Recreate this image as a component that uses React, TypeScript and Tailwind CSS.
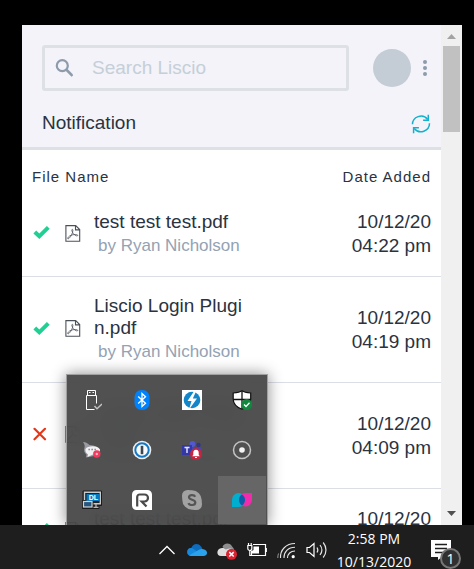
import type { ReactNode } from "react";

type FileRow = { name: string; by: string; date: string; time: string; ok: boolean };

const files: FileRow[] = [
  { name: "test test test.pdf", by: "Ryan Nicholson", date: "10/12/20", time: "04:22 pm", ok: true },
  { name: "Liscio Login Plugin.pdf", by: "Ryan Nicholson", date: "10/12/20", time: "04:19 pm", ok: true },
  { name: "Liscio Login Plugin.pdf", by: "Ryan Nicholson", date: "10/12/20", time: "04:09 pm", ok: false },
  { name: "test test test.pdf", by: "Ryan Nicholson", date: "10/12/20", time: "04:02 pm", ok: true },
];

function Icon({ children }: { children: ReactNode }) {
  return (
    <svg viewBox="0 0 20 20" width="20" height="20" fill="none" aria-hidden="true">
      {children}
    </svg>
  );
}

function StatusIcon({ ok }: { ok: boolean }) {
  return ok ? (
    <svg viewBox="0 0 17 18" width="17" height="18" aria-label="Uploaded" className="block">
      <path d="M1.800 7l4.500 4.300L15.300 2.400" fill="none" stroke="#20cf92" strokeWidth="4" />
    </svg>
  ) : (
    <svg viewBox="0 0 17 18" width="17" height="18" aria-label="Failed" className="block">
      <path d="M1.500 1.800l10.500 10.500M12 1.800L1.500 12.300" fill="none" stroke="#e0381b" strokeWidth="2.200" strokeLinecap="round" />
    </svg>
  );
}

function PdfIcon() {
  return (
    <svg viewBox="0 0 16 19" width="16" height="19" fill="none" stroke="#4b5159" aria-hidden="true" className="block">
      <path d="M.9.6h9.800l4 4v11.600H.9zM10.500.8v4.100h4" strokeWidth="1.100" />
      <path
        d="M2.600 13.200c1-2 2.900-2.900 5-3.400 1.700-.4 4-.4 5 .2.700.6-.5 1.200-1.600.7C8.800 9.700 7.200 7.600 6.800 5.200c-.1-1.100 1.100-1.200 1.100 0C7.800 8 6 11.600 4 13.400c-.7.6-1.500.5-1.400-.2z"
        strokeWidth=".8"
      />
    </svg>
  );
}

const trayApps: { label: string; icon: ReactNode; active?: boolean }[] = [
  {
    label: "Safely remove hardware",
    icon: (
      <Icon>
        <path d="M5.500 5V.5h8V5M4.500 19.500v-14h10v8M4.500 19.500h8" stroke="#fff" />
        <path d="M7 2.500h1.500M10.500 2.500H12" stroke="#fff" strokeWidth="1.200" />
        <path d="M12.500 16l2.500 2.800L20 14" stroke="#c4c4c4" strokeWidth="1.400" />
      </Icon>
    ),
  },
  {
    label: "Bluetooth",
    icon: (
      <Icon>
        <rect x="2.500" width="15" height="20" rx="7" fill="#0082fc" />
        <path d="M6.200 6.500l7.300 6.800-3.500 3.200V3.500l3.500 3.200-7.300 6.800" stroke="#fff" strokeWidth="1.300" />
      </Icon>
    ),
  },
  {
    label: "Disc tools",
    icon: (
      <Icon>
        <rect width="20" height="20" fill="#fff" />
        <circle cx="10" cy="10" r="8.300" fill="#1286c8" />
        <path d="M12.500.5L5.500 11h4L7 19.500 15 8.500h-4.200L14.500.5z" fill="#fff" />
      </Icon>
    ),
  },
  {
    label: "Windows Security",
    icon: (
      <Icon>
        <path d="M10 .8c2.500 1.800 5.500 2 8.700 2.200V9c0 5-4 8.500-8.700 10.200C5.300 17.500 1.200 14 1.200 9V3C4.500 2.800 7.500 2.600 10 .8z" fill="#fff" stroke="#111" strokeWidth="1.200" />
        <path d="M10 1v18M1.200 9.500h17.500" stroke="#111" strokeWidth="1.300" />
        <circle cx="14.700" cy="14.500" r="5.500" fill="#10893e" />
        <path d="M12 14.500l2 2 3.500-3.700" stroke="#fff" strokeWidth="1.300" />
      </Icon>
    ),
  },
  {
    label: "Shark chat",
    icon: (
      <Icon>
        <path d="M1 2c3 .2 5 1.500 6.500 3 5 .2 9.500 2 10.500 5.500-1 3-3 5-6 5.500L4 17.500l.5-3C2.500 13 1.500 11 2.500 7.500 3 6 2.500 4 1 2z" fill="#9a9aa2" />
        <path d="M3.500 9c2-3.500 12-4 14.500.5 0 3.500-3.500 5-7 5L5.500 17 6 14.500C4 13 3 11 3.500 9z" fill="#f2f2f4" />
        <path d="M6.500 9.500h1.300M9.500 9.500h1.300M12.500 9.500h1.300" stroke="#777" strokeWidth="1.500" />
        <circle cx="14.800" cy="14" r="3.700" fill="#f03a5f" />
        <circle cx="14.800" cy="14" r="1.200" fill="#ffb5c2" />
      </Icon>
    ),
  },
  {
    label: "Password manager",
    icon: (
      <Icon>
        <circle cx="10" cy="10" r="9.300" fill="#eee" />
        <circle cx="10" cy="10" r="6.700" fill="#fafafa" stroke="#1478c4" strokeWidth="2" />
        <path d="M10 5.800v8.400" stroke="#3c4650" strokeWidth="2.600" />
      </Icon>
    ),
  },
  {
    label: "Teams",
    icon: (
      <Icon>
        <circle cx="10.500" cy="4" r="3" fill="#5358d0" />
        <circle cx="16.500" cy="5" r="2.200" fill="#33368c" />
        <path d="M7 7.500h13V13a6 6 0 01-12 2z" fill="#4548ae" />
        <rect y="5" width="10" height="10" fill="#3438a6" />
        <path d="M2.500 7.500h5M5 7.500v5.500" stroke="#e6e6ff" strokeWidth="1.400" />
        <circle cx="14" cy="14" r="6" fill="#c4253f" />
        <path d="M14 9.800c-2 0-2.700 1.400-2.700 3v2l-1 1.400h7.400l-1-1.400v-2c0-1.600-.7-3-2.700-3zM13 17h2v1h-2z" fill="#fff" />
      </Icon>
    ),
  },
  {
    label: "Recorder",
    icon: (
      <Icon>
        <circle cx="10" cy="10" r="8.500" stroke="#c4c4c4" strokeWidth="1.500" />
        <circle cx="10" cy="10" r="2.800" fill="#f4f4f4" />
      </Icon>
    ),
  },
  {
    label: "DisplayLink",
    icon: (
      <Icon>
        <path d="M1 1h18.500v14.500H17V18.500H.5V10.500H1z" fill="#222" stroke="#1b1b1b" />
        <path d="M2.500 10V2.200h15.800v11.600H11.500" stroke="#c9c9c9" strokeWidth="1.400" />
        <rect x="4.500" y="4" width="12.500" height="7" fill="#0878be" />
        <text x="6.800" y="10" fontSize="7" fontWeight="700" fontFamily="Liberation Sans, sans-serif" fill="#fff">DL</text>
        <rect x="1.500" y="11.500" width="8.500" height="5.500" fill="#27567c" stroke="#d2d2d2" strokeWidth="1.200" />
        <path d="M11.500 17.300h5M14 14v3" stroke="#b5b5b5" strokeWidth="1.300" />
      </Icon>
    ),
  },
  {
    label: "Remote",
    icon: (
      <Icon>
        <path d="M4.500 0h11A4.500 4.500 0 0120 4.500V20H4.500A4.500 4.500 0 010 15.500v-11A4.500 4.500 0 014.500 0z" fill="#fff" />
        <path d="M5.200 16.500V7a2.500 2.500 0 012.500-2.500h4.800a3 3 0 010 7h-2.800l4.800 5" stroke="#4a4a4a" strokeWidth="2.200" />
      </Icon>
    ),
  },
  {
    label: "Skype",
    icon: (
      <Icon>
        <path d="M5.500 0C8 0 8 .3 10 .3A9.700 9.700 0 0119.700 10c0 2 .3 2.500.3 4.500A5.500 5.500 0 0114.500 20c-2.500 0-2.500-.3-4.500-.3A9.700 9.700 0 01.3 10C.3 8 0 7.500 0 5.500A5.500 5.500 0 015.500 0z" fill="#a2a2a2" />
        <path d="M13.200 6.700C12.200 4.500 7 4.500 7 7.300c0 3 6.300 2 6.300 5.200 0 3.300-5.800 3.200-6.800.6" stroke="#555" strokeWidth="2.200" />
      </Icon>
    ),
  },
  {
    label: "Liscio",
    active: true,
    icon: (
      <Icon>
        <path d="M0 17V9.500a6.500 6.500 0 0113 0c0 4.200-2.500 7.500-6.500 7.500z" fill="#00aecf" />
        <path d="M20 3v7a6.500 6.500 0 01-13 0c0-4 2.500-7 6.500-7z" fill="#f02cac" />
        <path d="M10 4.600c1.900 1.200 3 2.900 3 5.200s-1.100 4.400-3 5.800c-1.900-1.200-3-3.200-3-5.600s1.100-4.200 3-5.400z" fill="#0a5ea8" />
      </Icon>
    ),
  },
];

const statusIcons: { label: string; icon: ReactNode }[] = [
  { label: "Hide hidden icons", icon: <Icon><path d="M2.500 14L10 6.500l7.500 7.500" stroke="#fff" strokeWidth="1.300" /></Icon> },
  {
    label: "OneDrive",
    icon: (
      <Icon>
        <path d="M4 16a4 4 0 01.3-8C6 4 10.500 2.200 14 6.500c1 1 1.300 2 1.300 2.500a3.600 3.600 0 01.7 7z" fill="#0f6cbd" />
        <path d="M.5 13.500C-.5 10 2 7.500 5 8l11.500 7.500H4c-2 0-3.200-.8-3.500-2z" fill="#1689dc" />
        <path d="M2 15.500L12 9.700c2-1.200 4-.8 4.500-.2 2.500.3 3.700 2 3.500 3.700-.3 1.800-1.700 2.800-3.500 2.800H4c-.8 0-1.500-.2-2-.5z" fill="#2ba3ec" />
      </Icon>
    ),
  },
  {
    label: "OneDrive sync error",
    icon: (
      <Icon>
        <path d="M5.500 7C6.500 3 13 1.500 15.500 7c1 .8 1.500 2 1.500 3H9z" fill="#8e8e8e" />
        <path d="M4 16c-5 0-5-7.500 1-8 1.500-.2 3 .5 4 1.500 4-1.800 9-1 9 3s-2 3.500-4 3.500z" fill="#dedede" />
        <circle cx="14.500" cy="14.300" r="5.500" fill="#d92532" />
        <path d="M12.300 12.100l4.400 4.400M16.700 12.100l-4.400 4.400" stroke="#fff" strokeWidth="1.500" />
      </Icon>
    ),
  },
  {
    label: "Battery charging",
    icon: (
      <Icon>
        <path d="M6 4.500h12.500v11H4.500V11M19.300 8v4" stroke="#fff" strokeWidth="1.200" />
        <path d="M6.500 6.500H12v7H4.500V11l2-1z" fill="#fff" />
        <path d="M.8 5.500h4v3a2 2 0 01-4 0zM1.500 3v2M4.200 3v2M2.800 10v5.500h2" stroke="#fff" strokeWidth="1.200" />
      </Icon>
    ),
  },
  {
    label: "Wi-Fi",
    icon: (
      <Icon>
        <path d="M3.500 18C3 10 9 3.500 18 3.500M7 18C6.800 12 11 7.300 18 7.300M10.500 18c0-4 3-7 7.500-7" stroke="#e4e4e4" strokeWidth="1.100" />
        <path d="M.8 18c0-1.500.2-3 .7-4.500" stroke="#999" />
        <circle cx="16.200" cy="16.700" r="1.600" fill="#fff" />
      </Icon>
    ),
  },
  {
    label: "Volume",
    icon: (
      <svg viewBox="0 0 22 20" width="22" height="20" fill="none" aria-hidden="true">
        <path d="M1 7.500h2.500L8 3.500v13l-4.500-4H1z" stroke="#fff" strokeWidth="1.200" />
        <path d="M11 7.500c1 1.500 1 3.500 0 5M14 5c2.300 3 2.300 7 0 10M17.200 2.500c3.700 4.500 3.700 10.500 0 15" stroke="#e4e4e4" strokeWidth="1.200" />
      </svg>
    ),
  },
];

function Header() {
  return (
    <header className="border-b-[3px] border-[#dde1e5] bg-[#f3f3f9] pt-5 pr-[10px] pl-5">
      <div className="flex items-center">
        <label className="flex h-[46px] min-w-0 flex-1 items-center rounded-[3px] border-[3px] border-[#dde1e5] pl-[10px]">
          <svg viewBox="0 0 18 18" width="18" height="18" fill="none" stroke="#8d9bab" aria-hidden="true" className="shrink-0">
            <circle cx="7.300" cy="6.700" r="5.500" strokeWidth="2.200" />
            <path d="M11.200 10.500l6.300 6.400" strokeWidth="2.600" />
          </svg>
          <input
            type="text"
            aria-label="Search Liscio"
            placeholder="Search Liscio"
            className="ml-[19px] w-full min-w-0 bg-transparent outline-none placeholder:text-[#c5cfd8]"
          />
        </label>
        <button type="button" aria-label="Account" className="ml-6 size-[38px] shrink-0 rounded-full bg-[#c4ccd5]" />
        <button type="button" aria-label="More options" className="ml-3 mr-1 flex shrink-0 flex-col gap-[2px]">
          <span className="size-1 rounded-full bg-[#8d9bab]" />
          <span className="size-1 rounded-full bg-[#8d9bab]" />
          <span className="size-1 rounded-full bg-[#8d9bab]" />
        </button>
      </div>
      <div className="flex h-14 items-center justify-between pt-[9px]">
        <h1>Notification</h1>
        <button type="button" aria-label="Refresh">
          <svg viewBox="0 0 20 20" width="20" height="20" fill="none" stroke="#12b1cf" strokeWidth="1.500" className="block">
            <path d="M1.500 10.300C1.500 3 11.500-1.200 16.700 5.500M18.500 9.300c0 7.700-10 11.700-15.300 5.200" />
            <path d="M17.300.8v5.400h-5.200M2.600 19.300v-5.500h5.300" />
          </svg>
        </button>
      </div>
    </header>
  );
}

function FileTable() {
  return (
    <table className="w-full border-separate border-spacing-0">
      <thead>
        <tr className="text-left text-[15px] leading-6 tracking-[1px]">
          <th colSpan={3} className="pt-[15px] pb-[3px] pl-[10px] font-normal">File Name</th>
          <th className="pt-[15px] pr-[10px] pb-[3px] text-right font-normal">Date Added</th>
        </tr>
      </thead>
      <tbody>
        {files.map((f, i) => (
          <tr key={i} className="[&>td]:border-b [&>td]:border-[#dcdee6] [&>td]:py-[18px]">
            <td className="w-[43px] pl-[11px]"><StatusIcon ok={f.ok} /></td>
            <td className="w-[29px]"><PdfIcon /></td>
            <td>
              <div className="w-[150px] leading-[22px] break-all">{f.name}</div>
              <div className="pl-1 text-[17px] leading-[25px] whitespace-nowrap text-[#94a2b3]">by {f.by}</div>
            </td>
            <td className="pr-[10px] text-right leading-6 whitespace-nowrap">
              {f.date}
              <br />
              {f.time}
            </td>
          </tr>
        ))}
      </tbody>
    </table>
  );
}

function Scrollbar() {
  return (
    <div className="flex w-[21px] shrink-0 flex-col items-center bg-[#f0f0f0]">
      <button type="button" aria-label="Scroll up" className="flex h-[21px] w-full items-center justify-center pt-[2px]">
        <svg viewBox="0 0 9 5" width="9" height="5"><path d="M0 5L4.500 0 9 5z" fill="#a3a3a3" /></svg>
      </button>
      <div className="h-[86px] w-[17px] bg-[#c1c1c1]" />
      <button type="button" aria-label="Scroll down" className="mt-auto flex h-[23px] w-full items-center justify-center">
        <svg viewBox="0 0 9 5" width="9" height="5"><path d="M0 0h9L4.500 5z" fill="#505050" /></svg>
      </button>
    </div>
  );
}

function TrayPopup() {
  return (
    <div className="absolute bottom-0 left-11 grid grid-cols-4 gap-[2px] border border-b-0 border-[#a0a0a0] bg-[#424242]/92 p-px shadow-[0_0_14px_rgba(0,0,0,0.45)] backdrop-blur-md">
      {trayApps.map((a) => (
        <button
          key={a.label}
          type="button"
          aria-label={a.label}
          className={`flex size-12 items-center justify-center ${a.active ? "bg-[#666]" : ""}`}
        >
          {a.icon}
        </button>
      ))}
    </div>
  );
}

function Taskbar() {
  return (
    <footer className="relative -mb-[6px] flex h-[50px] shrink-0 items-center justify-end bg-[#1e1e1e] pr-2 text-white">
      {statusIcons.map((s) => (
        <button key={s.label} type="button" aria-label={s.label} className="flex w-[30px] justify-center">
          {s.icon}
        </button>
      ))}
      <button
        type="button"
        className="w-[84px] text-center font-['Open_Sans','Noto_Sans',sans-serif] text-sm leading-[23px]"
      >
        2:58 PM
        <br />
        10/13/2020
      </button>
      <button type="button" aria-label="Notifications" className="relative flex w-[50px] justify-center">
        <svg viewBox="0 0 20 20" width="20" height="20" fill="none" aria-hidden="true">
          <path d="M0 0h20v17h-9l-4 3v-3H0z" fill="#fff" />
          <path d="M4 4.500h12M4 8.500h12M4 12.500h9" stroke="#1e1e1e" strokeWidth="1.300" />
        </svg>
        <span className="absolute top-2 left-6 flex size-[21px] items-center justify-center rounded-full border-2 border-[#777] bg-[#303030] font-['Open_Sans','Noto_Sans',sans-serif] text-sm leading-4">
          1
        </span>
      </button>
    </footer>
  );
}

export default function App() {
  return (
    <div className="flex h-screen flex-col overflow-hidden bg-black font-['Liberation_Sans',Arial,sans-serif] text-[19px] text-[#2a333f]">
      <div className="relative mt-[25px] mr-3 ml-[22px] flex min-h-0 flex-1">
        <main className="min-w-0 flex-1 overflow-hidden bg-white">
          <Header />
          <FileTable />
        </main>
        <Scrollbar />
        <TrayPopup />
      </div>
      <Taskbar />
    </div>
  );
}
